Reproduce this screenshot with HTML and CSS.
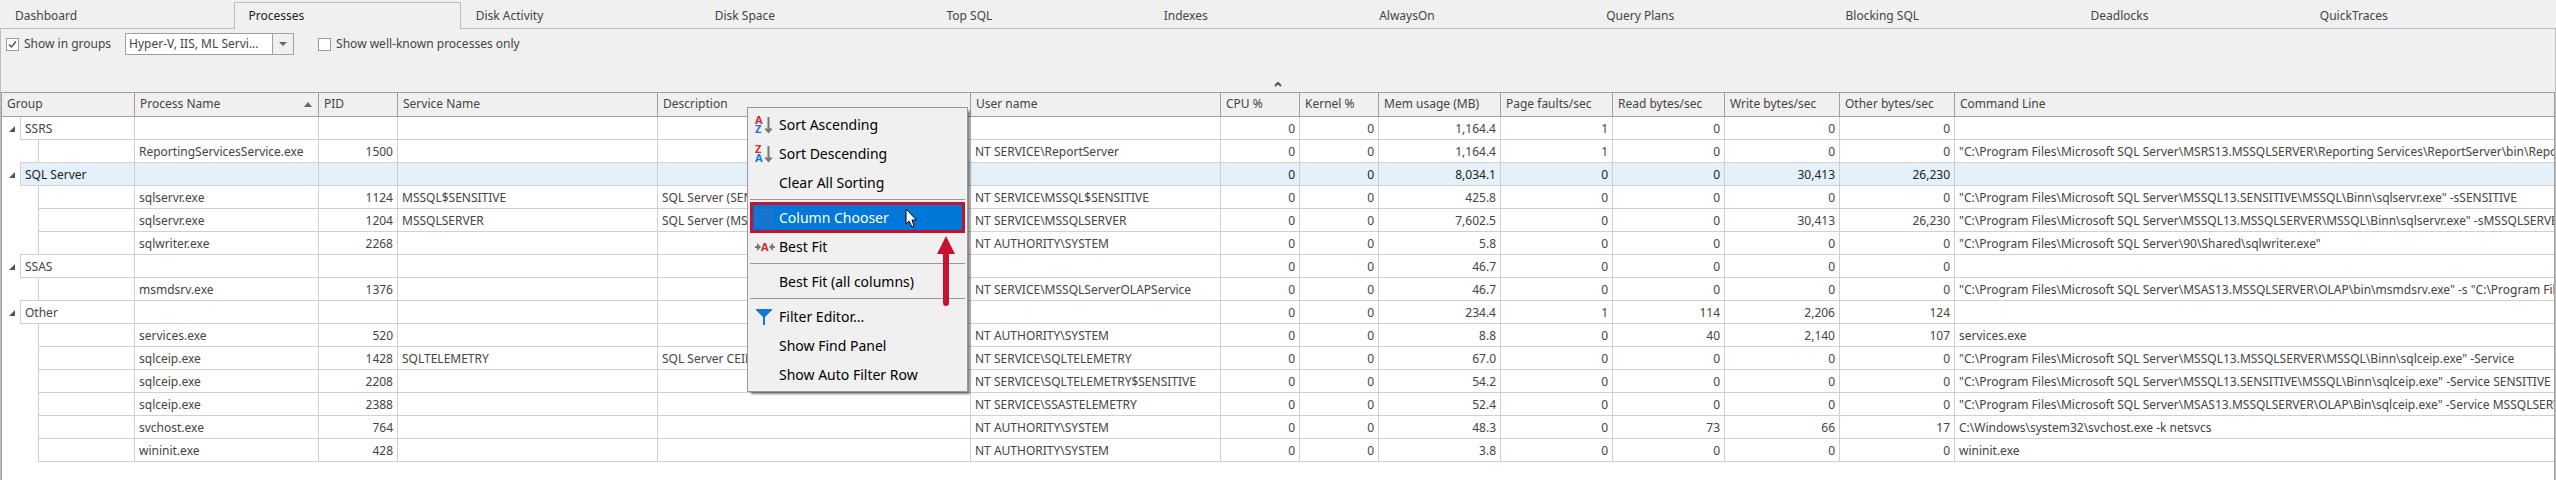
FILE: index.html
```html
<!DOCTYPE html>
<html lang="en">
<head>
    <meta charset="UTF-8">
    <meta name="viewport" content="width=device-width, initial-scale=1.0">
    <title>Processes</title>

    <link rel="stylesheet" href="styles.css">
</head>
<body>
<nav class="tabs">
    <a href="#dashboard">Dashboard</a>
    <a href="#processes" class="active">Processes</a>
    <a href="#disk-activity">Disk Activity</a>
    <a href="#disk-space">Disk Space</a>
    <a href="#top-sql">Top SQL</a>
    <a href="#indexes">Indexes</a>
    <a href="#alwayson">AlwaysOn</a>
    <a href="#query-plans">Query Plans</a>
    <a href="#blocking-sql">Blocking SQL</a>
    <a href="#deadlocks">Deadlocks</a>
    <a href="#quicktraces">QuickTraces</a>
</nav>

<main class="panel">
    <div class="toolbar">
        <label class="check"><input type="checkbox" checked>Show in groups</label>
        <div class="combo">
            <select aria-label="Groups">
                <option>Hyper-V, IIS, ML Servi...</option>
            </select>
        </div>
        <label class="check"><input type="checkbox">Show well-known processes only</label>
    </div>
    <button class="collapse" aria-label="Collapse toolbar">
        <svg width="8" height="6" viewBox="0 0 8 6"><path d="M1 5 L4 2 L7 5" fill="none" stroke="#555" stroke-width="2"/></svg>
    </button>

    <div class="grid">
        <table>
            <colgroup>
                <col class="w-group"><col class="w-process"><col class="w-small"><col class="w-service">
                <col class="w-description"><col class="w-user"><col class="w-small"><col class="w-small">
                <col class="w-mem"><col class="w-rate"><col class="w-rate"><col class="w-bytes"><col class="w-bytes"><col>
            </colgroup>
            <thead>
                <tr>
                    <th>Group</th>
                    <th class="sorted">Process Name</th>
                    <th>PID</th>
                    <th>Service Name</th>
                    <th>Description</th>
                    <th>User name</th>
                    <th>CPU %</th>
                    <th>Kernel %</th>
                    <th>Mem usage (MB)</th>
                    <th>Page faults/sec</th>
                    <th>Read bytes/sec</th>
                    <th>Write bytes/sec</th>
                    <th>Other bytes/sec</th>
                    <th>Command Line</th>
                </tr>
            </thead>
            <tbody>
                <tr>
                    <td class="tree"><div class="node"><button class="expander" aria-label="Collapse SSRS"></button><span>SSRS</span></div></td>
                    <td></td><td></td><td></td><td></td><td></td>
                    <td class="num">0</td><td class="num">0</td><td class="num">1,164.4</td><td class="num">1</td><td class="num">0</td><td class="num">0</td><td class="num">0</td>
                    <td></td>
                </tr>
                <tr>
                    <td class="tree"><div class="leaf"></div></td>
                    <td>ReportingServicesService.exe</td><td class="num">1500</td><td></td><td></td><td>NT SERVICE\ReportServer</td>
                    <td class="num">0</td><td class="num">0</td><td class="num">1,164.4</td><td class="num">1</td><td class="num">0</td><td class="num">0</td><td class="num">0</td>
                    <td>"C:\Program Files\Microsoft SQL Server\MSRS13.MSSQLSERVER\Reporting Services\ReportServer\bin\ReportingServicesService.exe"</td>
                </tr>
                <tr class="selected">
                    <td class="tree"><div class="node"><button class="expander" aria-label="Collapse SQL Server"></button><span>SQL Server</span></div></td>
                    <td></td><td></td><td></td><td></td><td></td>
                    <td class="num">0</td><td class="num">0</td><td class="num">8,034.1</td><td class="num">0</td><td class="num">0</td><td class="num">30,413</td><td class="num">26,230</td>
                    <td></td>
                </tr>
                <tr>
                    <td class="tree"><div class="leaf"></div></td>
                    <td>sqlservr.exe</td><td class="num">1124</td><td>MSSQL$SENSITIVE</td><td>SQL Server (SENSITIVE)</td><td>NT SERVICE\MSSQL$SENSITIVE</td>
                    <td class="num">0</td><td class="num">0</td><td class="num">425.8</td><td class="num">0</td><td class="num">0</td><td class="num">0</td><td class="num">0</td>
                    <td>"C:\Program Files\Microsoft SQL Server\MSSQL13.SENSITIVE\MSSQL\Binn\sqlservr.exe" -sSENSITIVE</td>
                </tr>
                <tr>
                    <td class="tree"><div class="leaf"></div></td>
                    <td>sqlservr.exe</td><td class="num">1204</td><td>MSSQLSERVER</td><td>SQL Server (MSSQLSERVER)</td><td>NT SERVICE\MSSQLSERVER</td>
                    <td class="num">0</td><td class="num">0</td><td class="num">7,602.5</td><td class="num">0</td><td class="num">0</td><td class="num">30,413</td><td class="num">26,230</td>
                    <td>"C:\Program Files\Microsoft SQL Server\MSSQL13.MSSQLSERVER\MSSQL\Binn\sqlservr.exe" -sMSSQLSERVER</td>
                </tr>
                <tr>
                    <td class="tree"><div class="leaf"></div></td>
                    <td>sqlwriter.exe</td><td class="num">2268</td><td></td><td></td><td>NT AUTHORITY\SYSTEM</td>
                    <td class="num">0</td><td class="num">0</td><td class="num">5.8</td><td class="num">0</td><td class="num">0</td><td class="num">0</td><td class="num">0</td>
                    <td>"C:\Program Files\Microsoft SQL Server\90\Shared\sqlwriter.exe"</td>
                </tr>
                <tr>
                    <td class="tree"><div class="node"><button class="expander" aria-label="Collapse SSAS"></button><span>SSAS</span></div></td>
                    <td></td><td></td><td></td><td></td><td></td>
                    <td class="num">0</td><td class="num">0</td><td class="num">46.7</td><td class="num">0</td><td class="num">0</td><td class="num">0</td><td class="num">0</td>
                    <td></td>
                </tr>
                <tr>
                    <td class="tree"><div class="leaf"></div></td>
                    <td>msmdsrv.exe</td><td class="num">1376</td><td></td><td></td><td>NT SERVICE\MSSQLServerOLAPService</td>
                    <td class="num">0</td><td class="num">0</td><td class="num">46.7</td><td class="num">0</td><td class="num">0</td><td class="num">0</td><td class="num">0</td>
                    <td>"C:\Program Files\Microsoft SQL Server\MSAS13.MSSQLSERVER\OLAP\bin\msmdsrv.exe" -s "C:\Program Files\Microsoft SQL Server"</td>
                </tr>
                <tr>
                    <td class="tree"><div class="node"><button class="expander" aria-label="Collapse Other"></button><span>Other</span></div></td>
                    <td></td><td></td><td></td><td></td><td></td>
                    <td class="num">0</td><td class="num">0</td><td class="num">234.4</td><td class="num">1</td><td class="num">114</td><td class="num">2,206</td><td class="num">124</td>
                    <td></td>
                </tr>
                <tr>
                    <td class="tree"><div class="leaf"></div></td>
                    <td>services.exe</td><td class="num">520</td><td></td><td></td><td>NT AUTHORITY\SYSTEM</td>
                    <td class="num">0</td><td class="num">0</td><td class="num">8.8</td><td class="num">0</td><td class="num">40</td><td class="num">2,140</td><td class="num">107</td>
                    <td>services.exe</td>
                </tr>
                <tr>
                    <td class="tree"><div class="leaf"></div></td>
                    <td>sqlceip.exe</td><td class="num">1428</td><td>SQLTELEMETRY</td><td>SQL Server CEIP service</td><td>NT SERVICE\SQLTELEMETRY</td>
                    <td class="num">0</td><td class="num">0</td><td class="num">67.0</td><td class="num">0</td><td class="num">0</td><td class="num">0</td><td class="num">0</td>
                    <td>"C:\Program Files\Microsoft SQL Server\MSSQL13.MSSQLSERVER\MSSQL\Binn\sqlceip.exe" -Service</td>
                </tr>
                <tr>
                    <td class="tree"><div class="leaf"></div></td>
                    <td>sqlceip.exe</td><td class="num">2208</td><td></td><td></td><td>NT SERVICE\SQLTELEMETRY$SENSITIVE</td>
                    <td class="num">0</td><td class="num">0</td><td class="num">54.2</td><td class="num">0</td><td class="num">0</td><td class="num">0</td><td class="num">0</td>
                    <td>"C:\Program Files\Microsoft SQL Server\MSSQL13.SENSITIVE\MSSQL\Binn\sqlceip.exe" -Service SENSITIVE</td>
                </tr>
                <tr>
                    <td class="tree"><div class="leaf"></div></td>
                    <td>sqlceip.exe</td><td class="num">2388</td><td></td><td></td><td>NT SERVICE\SSASTELEMETRY</td>
                    <td class="num">0</td><td class="num">0</td><td class="num">52.4</td><td class="num">0</td><td class="num">0</td><td class="num">0</td><td class="num">0</td>
                    <td>"C:\Program Files\Microsoft SQL Server\MSAS13.MSSQLSERVER\OLAP\Bin\sqlceip.exe" -Service MSSQLSERVER</td>
                </tr>
                <tr>
                    <td class="tree"><div class="leaf"></div></td>
                    <td>svchost.exe</td><td class="num">764</td><td></td><td></td><td>NT AUTHORITY\SYSTEM</td>
                    <td class="num">0</td><td class="num">0</td><td class="num">48.3</td><td class="num">0</td><td class="num">73</td><td class="num">66</td><td class="num">17</td>
                    <td>C:\Windows\system32\svchost.exe -k netsvcs</td>
                </tr>
                <tr>
                    <td class="tree"><div class="leaf"></div></td>
                    <td>wininit.exe</td><td class="num">428</td><td></td><td></td><td>NT AUTHORITY\SYSTEM</td>
                    <td class="num">0</td><td class="num">0</td><td class="num">3.8</td><td class="num">0</td><td class="num">0</td><td class="num">0</td><td class="num">0</td>
                    <td>wininit.exe</td>
                </tr>
            </tbody>
        </table>
    </div>
</main>

<!-- Column header context menu -->
<div class="menu">
    <button>
        <svg width="18" height="18" viewBox="0 0 18 18">
            <text x="0" y="8" class="letter red">A</text>
            <text x="0" y="17" class="letter blue">Z</text>
            <path d="M13.5 1 V16 M10.5 12.5 L13.5 16 L16.5 12.5" fill="none" stroke="#777" stroke-width="2"/>
        </svg>
        Sort Ascending
    </button>
    <button>
        <svg width="18" height="18" viewBox="0 0 18 18">
            <text x="0" y="8" class="letter red">Z</text>
            <text x="0" y="17" class="letter blue">A</text>
            <path d="M13.5 1 V16 M10.5 12.5 L13.5 16 L16.5 12.5" fill="none" stroke="#777" stroke-width="2"/>
        </svg>
        Sort Descending
    </button>
    <button>Clear All Sorting</button>
    <hr>
    <button class="highlight">
        <svg width="18" height="18" viewBox="0 0 18 18">
            <rect x="1" y="0" width="16" height="18" fill="#1874d2" stroke="#2b78bd"/>
            <path d="M3 5.5 H15 M3 9.5 H15 M3 13.5 H15" stroke="#1279da"/>
        </svg>
        Column Chooser
    </button>
    <button>
        <svg width="20" height="18" viewBox="0 0 20 18">
            <text x="6" y="13" class="letter red">A</text>
            <path d="M0 9 H3 M17 9 H20" stroke="#777" stroke-width="2"/>
            <path d="M2 5 L6 9 L2 13 Z M18 5 L14 9 L18 13 Z" fill="#777"/>
        </svg>
        Best Fit
    </button>
    <hr>
    <button>Best Fit (all columns)</button>
    <hr>
    <button>
        <svg width="18" height="18" viewBox="0 0 18 18"><path d="M1 1 H17 V2 L10 9 V17 H8 V9 L1 2 Z" fill="#1177d7"/></svg>
        Filter Editor...
    </button>
    <button>Show Find Panel</button>
    <button>Show Auto Filter Row</button>

    <svg class="cursor" width="13" height="20" viewBox="0 0 13 20">
        <path d="M1 1 V16 L4 13 L7 19 L9 18 L7 12 H11.5 Z" fill="#fff" stroke="#000"/>
    </svg>
    <svg class="pointer" width="18" height="70" viewBox="0 0 18 70">
        <path d="M9 0 L18 18 H0 Z" fill="#c4122f"/>
        <path d="M9 15 V67" stroke="#c4122f" stroke-width="6" stroke-linecap="round"/>
    </svg>
</div>
</body>
</html>
```
FILE: styles.css
```css
* {
    box-sizing: border-box;
}
body {
    margin: 0;
    min-height: 100vh;
    display: flex;
    flex-direction: column;
    background-color: #f0f0f0;
    color: #444;
    font-family: "Noto Sans", Tahoma, sans-serif;
    font-size: 12px;
    line-height: 16px;
}
button, select {
    font: inherit;
    color: inherit;
}
.tabs {
    display: flex;
    padding-top: 2px;
}
.tabs::after {
    content: "";
    width: 12px;
    border-bottom: 1px solid #bdbdbd;
}
.tabs a {
    flex: 1 1 auto;
    height: 27px;
    padding: 6px 15px 0;
    border-bottom: 1px solid #bdbdbd;
    color: #444;
    text-decoration: none;
}
.tabs .active {
    padding: 5px 14px 0;
    border: 1px solid #bdbdbd;
    border-bottom: none;
    color: #222;
}
.panel {
    flex: 1;
    display: flex;
    flex-direction: column;
    border: 1px solid #bdbdbd;
    border-width: 0 1px;
}
.toolbar {
    display: flex;
    align-items: center;
    padding: 4px 5px 0;
}
.check {
    display: flex;
    align-items: center;
    gap: 5px;
}
.check input {
    appearance: none;
    width: 13px;
    height: 13px;
    margin: 0;
    border: 1px solid #999;
    background-color: #fff;
}
.check input:checked {
    background-image: url("data:image/svg+xml,%3Csvg xmlns='http://www.w3.org/2000/svg' viewBox='0 0 11 11'%3E%3Cpath d='M2 5.5L4.5 8L9 2.5' fill='none' stroke='%23555' stroke-width='1.5'/%3E%3C/svg%3E");
}
.combo {
    position: relative;
    width: 169px;
    margin: 0 24px 0 14px;
}
.combo select {
    appearance: none;
    display: block;
    width: 100%;
    height: 22px;
    padding: 0 24px 0 3px;
    border: 1px solid #a0a0a0;
    border-radius: 0;
    background-color: #fff;
}
.combo::after {
    content: "";
    position: absolute;
    top: 1px;
    right: 1px;
    bottom: 1px;
    width: 20px;
    border-left: 1px solid #a0a0a0;
    background: #f0f0f0 url("data:image/svg+xml,%3Csvg xmlns='http://www.w3.org/2000/svg' width='8' height='4'%3E%3Cpath d='M0 0H8L4 4Z' fill='%23666'/%3E%3C/svg%3E") no-repeat center;
    pointer-events: none;
}
.collapse {
    display: block;
    height: 16px;
    margin-top: 21px;
    padding: 0;
    border: none;
    background: none;
    line-height: 0;
}
.grid {
    flex: 1;
    border: 1px solid #a0a0a0;
    border-bottom: none;
    background-color: #fff;
}
table {
    width: 100%;
    table-layout: fixed;
    border-collapse: separate;
    border-spacing: 0;
}
.w-group { width: 133px; }
.w-process { width: 184px; }
.w-small { width: 79px; }
.w-service { width: 260px; }
.w-description { width: 313px; }
.w-user { width: 250px; }
.w-mem { width: 122px; }
.w-rate { width: 112px; }
.w-bytes { width: 115px; }
th {
    height: 24px;
    padding: 0 5px 1px;
    border-right: 1px solid #a0a0a0;
    border-bottom: 1px solid #a0a0a0;
    background-color: #f0f0f0;
    font-weight: normal;
    text-align: left;
    white-space: nowrap;
}
.sorted {
    background-image: url("data:image/svg+xml,%3Csvg xmlns='http://www.w3.org/2000/svg' width='8' height='5'%3E%3Cpath d='M0 5H8L4 0Z' fill='%23666'/%3E%3C/svg%3E");
    background-repeat: no-repeat;
    background-position: right 6px center;
}
td {
    height: 23px;
    padding: 2px 4px 0;
    border-right: 1px solid #d0d0d0;
    border-bottom: 1px solid #d0d0d0;
    overflow: hidden;
    white-space: nowrap;
}
th:last-child, td:last-child {
    border-right: none;
}
.num {
    text-align: right;
}
.tree {
    padding: 0;
    border-bottom: none;
    overflow: visible;
}
.node {
    display: flex;
    height: 23px;
}
.node span {
    flex: 1;
    padding: 4px 4px 0;
    border-left: 1px solid #d0d0d0;
    border-bottom: 1px solid #d0d0d0;
}
/* the group's top line reaches further left than the leaf rows above it */
tr + tr .node span {
    margin-top: -1px;
    border-top: 1px solid #d0d0d0;
}
.leaf {
    height: 23px;
    margin-left: 36px;
    border-left: 1px solid #d0d0d0;
    border-bottom: 1px solid #d0d0d0;
}
.expander {
    width: 18px;
    padding: 0;
    border: none;
    background: url("data:image/svg+xml,%3Csvg xmlns='http://www.w3.org/2000/svg' width='6' height='6'%3E%3Cpath d='M6 0V6H0Z' fill='%23555'/%3E%3C/svg%3E") no-repeat 7px center;
}
.selected {
    color: #222;
}
.selected td:not(.tree), .selected .node span {
    background-color: #e4f1fa;
}
.menu {
    position: absolute;
    top: 107px;
    left: 747px;
    width: 221px;
    padding: 2px;
    border: 1px solid #999;
    background-color: #f0f0f0;
    box-shadow: 3px 3px 2px -1px rgba(0, 0, 0, 0.5);
    color: #000;
    font-size: 14px;
}
.menu button {
    position: relative;
    display: block;
    width: 100%;
    height: 29px;
    padding: 0 0 0 29px;
    border: none;
    background: none;
    text-align: left;
}
.menu button svg {
    position: absolute;
    top: 6px;
    left: 5px;
}
.menu hr {
    height: 1px;
    margin: 2px 0 3px;
    border: none;
    background-color: #999;
}
.menu .highlight {
    height: 31px;
    margin: -1px 0;
    padding-left: 26px;
    border: 3px solid #c4122f;
    background-color: #0078d7;
    color: #fff;
}
.menu .highlight svg {
    top: 4px;
    left: 2px;
}
.letter {
    font-size: 11px;
    font-weight: bold;
}
.red { fill: #d22b2b; }
.blue { fill: #1177d7; }
.cursor {
    position: absolute;
    top: 100px;
    left: 157px;
}
.pointer {
    position: absolute;
    top: 128px;
    left: 189px;
}
```
